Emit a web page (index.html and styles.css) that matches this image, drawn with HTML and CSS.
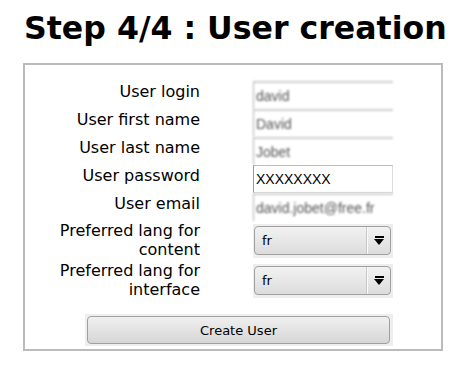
FILE: index.html
```html
<!DOCTYPE html>
<html lang="en">
<head>
    <meta charset="UTF-8">
    <title>Step 4/4 : User creation</title>
    <link rel="stylesheet" href="styles.css">
</head>
<body>
<h1>Step 4/4 : User creation</h1>
<div class="form-box">
    <div class="form-grid">
        <label class="form-label">User login</label>
        <div class="field blurred"><span>david</span></div>

        <label class="form-label">User first name</label>
        <div class="field blurred"><span>David</span></div>

        <label class="form-label">User last name</label>
        <div class="field blurred"><span>Jobet</span></div>

        <label class="form-label">User password</label>
        <div class="field password"><span>XXXXXXXX</span></div>

        <label class="form-label">User email</label>
        <div class="field blurred"><span>david.jobet@free.fr</span></div>

        <label class="form-label tall">Preferred lang for content</label>
        <div class="select-wrap">
            <div class="select-box">
                <span class="select-value">fr</span>
                <span class="select-arrow"><span class="arrow-bar"></span><span class="arrow-tri"></span></span>
            </div>
        </div>

        <label class="form-label tall">Preferred lang for interface</label>
        <div class="select-wrap">
            <div class="select-box">
                <span class="select-value">fr</span>
                <span class="select-arrow"><span class="arrow-bar"></span><span class="arrow-tri"></span></span>
            </div>
        </div>
    </div>
    <div class="button-row">
        <div class="button-wrap">
            <button class="create-button">Create User</button>
        </div>
    </div>
</div>
</body>
</html>
```

FILE: styles.css
```css
body {
    margin: 8px;
    font-family: 'DejaVu Sans', sans-serif;
    color: #000;
    background: #fff;
}
h1 {
    font-size: 31.6px;
    font-weight: bold;
    margin: 2px 0 16px 16px;
    line-height: 37px;
}
.form-box {
    margin-left: 15px;
    width: 416px;
    height: 284px;
    border: 2px solid #bbb;
}
.form-grid {
    display: grid;
    grid-template-columns: 150px 140px;
    column-gap: 53px;
    padding: 16px 0 0 25px;
}
.form-label {
    font-size: 16px;
    text-align: right;
    height: 28px;
    box-sizing: border-box;
    padding-bottom: 8px;
    display: flex;
    align-items: center;
    justify-content: flex-end;
}
.form-label.tall {
    height: 40px;
    padding-bottom: 2px;
    line-height: 19px;
}
.field {
    height: 28px;
    box-sizing: border-box;
    display: flex;
    align-items: center;
    padding-left: 2px;
}
.field.blurred {
    border-top: 2px solid #d0d0d0;
    border-left: 1px solid #b0b0b0;
    background: #fff;
    filter: blur(1.2px);
}
.field.blurred span {
    font-family: 'Liberation Sans', sans-serif;
    font-size: 14px;
    color: #555;
}
.field.password {
    border: 1px solid #999;
    border-right-color: #ddd;
    border-bottom-color: #ddd;
}
.field.password span {
    font-family: 'Liberation Sans', sans-serif;
    font-size: 14px;
}
.select-wrap {
    align-self: center;
    background: #eee;
    padding: 2px 2px 3px 1px;
}
.select-box {
    height: 29px;
    box-sizing: border-box;
    border: 1px solid #a0a0a0;
    border-radius: 4px;
    background: linear-gradient(#f2f2f2, #dcdcdc);
    display: flex;
    align-items: center;
}
.select-value {
    flex: 1;
    font-size: 13px;
    padding-left: 7px;
}
.select-arrow {
    width: 22px;
    height: 100%;
    border-left: 1px solid #fafafa;
    box-shadow: -1px 0 0 #c8c8c8;
    display: flex;
    flex-direction: column;
    align-items: center;
    justify-content: center;
    gap: 1px;
}
.arrow-bar {
    width: 9px;
    height: 2px;
    background: #000;
}
.arrow-tri {
    width: 0;
    height: 0;
    border-left: 5px solid transparent;
    border-right: 5px solid transparent;
    border-top: 6px solid #000;
}
.button-row {
    padding: 13px 0 0 60px;
}
.button-wrap {
    display: inline-block;
    background: #eee;
    padding: 2px 3px 2px 2px;
}
.create-button {
    display: block;
    width: 303px;
    height: 28px;
    border: 1px solid #a0a0a0;
    border-radius: 4px;
    background: linear-gradient(#f0f0f0, #d6d6d6);
    font-family: 'DejaVu Sans', sans-serif;
    font-size: 13px;
    color: #000;
    padding: 0;
}
```
